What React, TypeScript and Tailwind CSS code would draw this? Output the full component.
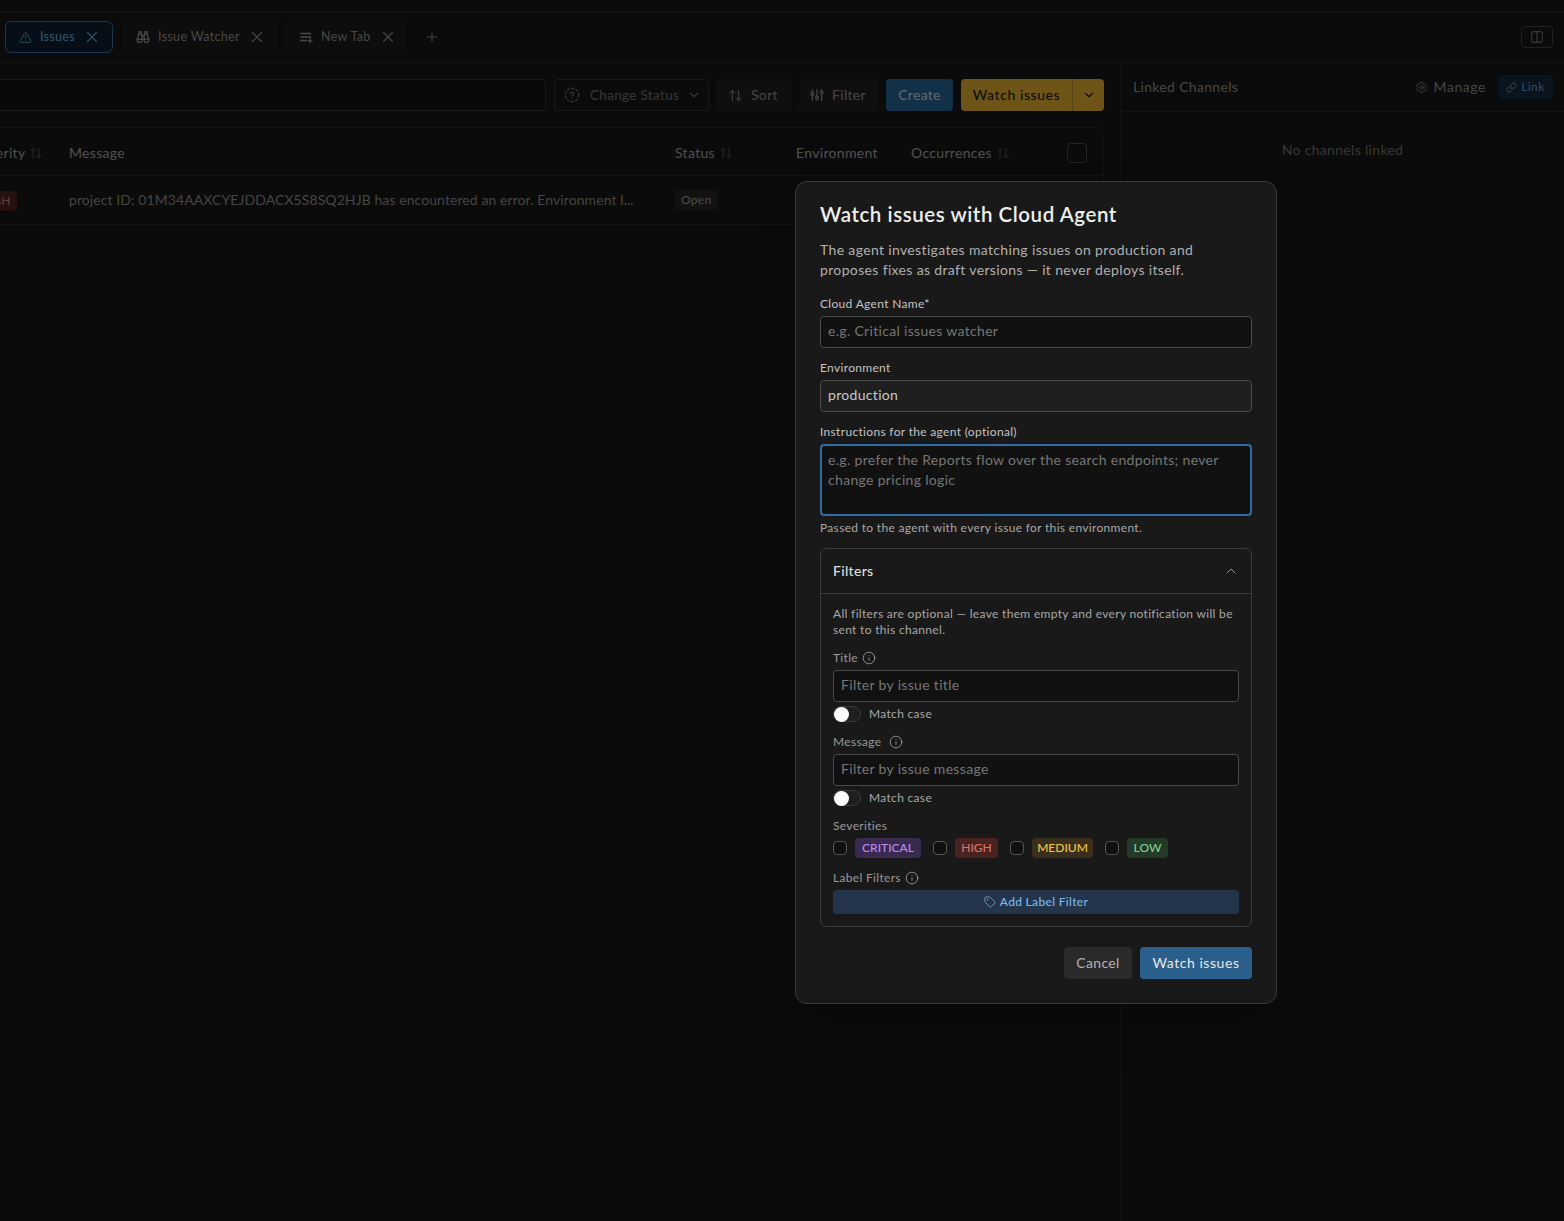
import type { ReactNode } from "react";
import {
  ArrowUpDown,
  Binoculars,
  ChevronDown,
  ChevronUp,
  Columns2,
  Info,
  Link,
  Plus,
  Settings,
  Tag,
  TriangleAlert,
  X,
} from "lucide-react";

const inputClass =
  "block h-8 w-full rounded border border-[#4a4a4a] bg-[#111111] px-[7px] pb-1 text-sm text-[#c8c8c8] outline-none placeholder:text-[#767676]";

function PageTab({ icon, label, active, width }: { icon: ReactNode; label: string; active?: boolean; width: string }) {
  return (
    <div
      className={`flex h-8 items-center gap-2 whitespace-nowrap rounded-md border pl-[13px] text-[12.5px] ${width} ${
        active
          ? "border-[#2f6a9c] bg-[#0c1f30] pr-[11px] text-[#69a8d8]"
          : "border-transparent bg-[#1b1b1b] pr-[10px] text-[#8e8e8e]"
      }`}
    >
      {icon}
      <span>{label}</span>
      <X size={18} strokeWidth={1.5} className="ml-auto shrink-0" />
    </div>
  );
}

function SortIcon() {
  return <ArrowUpDown size={14} strokeWidth={1.5} className="ml-1 text-[#5c5c5c]" />;
}

function HeaderCell({ label, sort, width }: { label: string; sort?: boolean; width: string }) {
  return (
    <div className={`flex shrink-0 items-center ${width}`}>
      {label}
      {sort && <SortIcon />}
    </div>
  );
}

function DashedHelp() {
  return (
    <svg width="16" height="16" viewBox="0 0 24 24" fill="none" stroke="currentColor" strokeWidth="1.8" strokeLinecap="round" className="shrink-0">
      <circle cx="12" cy="12" r="10" strokeDasharray="3.4 3.2" />
      <path d="M9.4 9.4a2.7 2.7 0 0 1 5.2.9c0 1.8-2.6 2.4-2.6 3.6" />
      <path d="M12 17.2h.01" />
    </svg>
  );
}

function ListAdd() {
  return (
    <svg width="14" height="14" viewBox="0 0 24 24" fill="none" stroke="currentColor" strokeWidth="2.2" strokeLinecap="round" className="shrink-0">
      <path d="M3 6h17" />
      <path d="M3 12h17" />
      <path d="M3 18h10" />
      <path d="M19 15v7" />
      <path d="M15.5 18.5h7" />
    </svg>
  );
}

function Sliders() {
  return (
    <svg width="14" height="14" viewBox="0 0 24 24" fill="none" stroke="currentColor" strokeWidth="2.2" strokeLinecap="round">
      <path d="M4 3v5M4 13v8" />
      <circle cx="4" cy="10.5" r="2.4" />
      <path d="M12 3v11M12 19v2" />
      <circle cx="12" cy="16.5" r="2.4" />
      <path d="M20 3v2M20 10v11" />
      <circle cx="20" cy="7.5" r="2.4" />
    </svg>
  );
}

function ToolButton({ icon, label, width }: { icon: ReactNode; label: string; width: string }) {
  return (
    <div className={`flex h-8 items-center gap-2 rounded bg-[#1f1f1f] pl-[11px] text-sm text-[#8c8c8c] ${width}`}>
      {icon}
      {label}
    </div>
  );
}

function FieldLabel({ children }: { children: ReactNode }) {
  return <div className="text-xs leading-4 text-[#c4c4c4]">{children}</div>;
}

function InfoLabel({ label, gap }: { label: string; gap: string }) {
  return (
    <div className={`flex items-center text-xs leading-4 text-[#9a9a9a] ${gap}`}>
      {label}
      <Info size={14} strokeWidth={1.5} />
    </div>
  );
}

function MatchCase() {
  return (
    <div className="mt-1 flex h-4 items-center gap-2 text-xs text-[#a8a8a8]">
      <div className="flex h-4 w-7 items-center rounded-full border border-[#3a3a3a] bg-[#1f1f1f]">
        <div className="h-[15px] w-[15px] rounded-full bg-white" />
      </div>
      Match case
    </div>
  );
}

function Severity({ label, className }: { label: string; className: string }) {
  return (
    <div className="flex items-center gap-2">
      <div className="h-3.5 w-3.5 rounded-sm border border-[#555555] bg-[#111111]" />
      <span className={`flex h-5 items-center justify-center rounded text-xs font-medium tracking-normal ${className}`}>{label}</span>
    </div>
  );
}

export default function App() {
  return (
    <div className="relative h-screen overflow-hidden bg-[#161616] font-['Lato',sans-serif] tracking-[0.02em]">
      <div className="h-3 border-b border-[#262626]" />

      <div className="flex h-[51px] items-center border-b border-[#262626] pl-[5px] pr-[11px]">
        <PageTab icon={<TriangleAlert size={15} strokeWidth={1.5} />} label="Issues" active width="w-[108px]" />
        <div className="ml-[9px]">
          <PageTab icon={<Binoculars size={14} strokeWidth={2.2} />} label="Issue Watcher" width="w-[155px]" />
        </div>
        <div className="ml-2">
          <PageTab icon={<ListAdd />} label="New Tab" width="w-[122px]" />
        </div>
        <Plus size={16} strokeWidth={1.5} className="ml-[17px] text-[#8e8e8e]" />
        <div className="ml-auto flex h-[22px] w-8 items-center justify-center rounded border border-[#404040] text-[#8e8e8e]">
          <Columns2 size={14} strokeWidth={1.5} />
        </div>
      </div>

      <div className="-ml-[59px] flex h-full">
        <div className="w-[1180px] shrink-0 border-r border-[#262626] px-4 pt-4">
          <div className="flex h-8 gap-2">
            <div className="w-[589px] rounded border border-[#333333] bg-[#111111]" />
            <div className="flex h-8 w-[155px] items-center gap-2.5 whitespace-nowrap rounded border border-[#333333] pl-[9px] pr-2 text-[13.5px] text-[#6e6e6e]">
              <DashedHelp />
              Change Status
              <ChevronDown size={14} className="-ml-0.5 shrink-0" />
            </div>
            <ToolButton icon={<ArrowUpDown size={15} strokeWidth={1.6} />} label="Sort" width="w-[74px]" />
            <ToolButton icon={<Sliders />} label="Filter" width="w-[79px]" />
            <div className="flex h-8 w-[67px] items-center justify-center rounded bg-[#276093] text-sm text-[#c0d0dc]">
              Create
            </div>
            <div className="flex h-8 w-[143px] rounded bg-[#dea931] text-sm font-medium tracking-[0.04em] text-[#1a1a1a]">
              <div className="flex w-[112px] items-center justify-center border-r border-[#b0862a]">Watch issues</div>
              <div className="flex flex-1 items-center justify-center">
                <ChevronDown size={14} />
              </div>
            </div>
          </div>

          <div className="mt-4 rounded-lg border border-[#262626]">
            <div className="flex h-12 items-center border-b border-[#262626] pl-[15px] pr-4 pt-0.5 text-sm text-[#a0a0a0]">
              <HeaderCell label="Severity" sort width="w-[96px]" />
              <HeaderCell label="Message" width="w-[606px]" />
              <HeaderCell label="Status" sort width="w-[121px]" />
              <HeaderCell label="Environment" width="w-[115px]" />
              <HeaderCell label="Occurrences" sort width="w-[120px]" />
              <div className="ml-auto h-5 w-5 rounded border border-[#4a4a4a]" />
            </div>
            <div className="flex h-12 items-center pl-[15px] text-sm text-[#8a8a8a]">
              <div className="w-[96px] shrink-0">
                <span className="inline-flex h-5 items-center rounded bg-[#4a2320] px-1.5 text-xs text-[#d9736a]">HIGH</span>
              </div>
              <div className="w-[606px] shrink-0 whitespace-nowrap tracking-[0.006em]">
                project ID: 01M34AAXCYEJDDACX5S8SQ2HJB has encountered an error. Environment l...
              </div>
              <span className="inline-flex h-5 items-center rounded bg-[#242424] px-1.5 text-xs text-[#9a9a9a]">Open</span>
            </div>
          </div>
        </div>

        <div className="flex-1">
          <div className="flex h-[49px] items-center border-b border-[#262626] pl-3 pr-[11px] text-sm text-[#8c8c8c]">
            Linked Channels
            <div className="ml-auto flex items-center gap-1.5 tracking-[0.04em]">
              <Settings size={13} strokeWidth={1.5} />
              Manage
            </div>
            <div className="ml-3 flex h-6 w-[55px] items-center justify-center gap-1 rounded bg-[#13283b] text-xs font-medium text-[#5f97c6]">
              <Link size={11} />
              Link
            </div>
          </div>
          <div className="mt-7 text-center text-sm text-[#6e6e6e]">No channels linked</div>
        </div>
      </div>

      <div className="absolute inset-0 bg-black/50" />

      <div className="absolute left-[795px] top-[181px] w-[482px] rounded-xl border border-[#3a3a3a] bg-[#191919] px-6 pb-6 pt-[18px] shadow-2xl">
        <h2 className="text-[20.5px] leading-7 font-semibold tracking-[0.027em] text-[#eeeeee]">Watch issues with Cloud Agent</h2>
        <p className="mt-3 text-sm leading-5 tracking-[0.025em] text-[#b0b0b0]">
          The agent investigates matching issues on production and proposes fixes as draft versions — it never deploys itself.
        </p>

        <div className="mt-4">
          <FieldLabel>Cloud Agent Name*</FieldLabel>
          <input className={`mt-1 ${inputClass}`} placeholder="e.g. Critical issues watcher" />
        </div>
        <div className="mt-3">
          <FieldLabel>Environment</FieldLabel>
          <input
            className="mt-1 block h-8 w-full rounded border border-[#4a4a4a] bg-[#1f1f1f] px-[7px] pb-1 text-sm text-[#c8c8c8] outline-none"
            defaultValue="production"
          />
        </div>
        <div className="mt-3">
          <FieldLabel>Instructions for the agent (optional)</FieldLabel>
          <textarea
            className="mt-1 block h-[72px] w-full resize-none rounded border-2 border-[#2e6ca3] bg-[#111111] px-1.5 py-1 text-sm leading-5 outline-none placeholder:text-[#767676]"
            placeholder="e.g. prefer the Reports flow over the search endpoints; never change pricing logic"
          />
          <div className="mt-1 text-xs leading-4 text-[#a8a8a8]">Passed to the agent with every issue for this environment.</div>
        </div>

        <div className="mt-3 rounded-md border border-[#3a3a3a]">
          <div className="flex h-[45px] items-center justify-between border-b border-[#3a3a3a] px-3 text-sm font-medium text-[#dedede]">
            Filters
            <ChevronUp size={16} strokeWidth={1.5} className="text-[#8e8e8e]" />
          </div>
          <div className="p-3">
            <p className="text-xs leading-4 text-[#a8a8a8]">
              All filters are optional — leave them empty and every notification will be sent to this channel.
            </p>
            <div className="mt-3">
              <InfoLabel label="Title" gap="gap-1" />
              <input className={`mt-1 ${inputClass}`} placeholder="Filter by issue title" />
              <MatchCase />
            </div>
            <div className="mt-3">
              <InfoLabel label="Message" gap="gap-2" />
              <input className={`mt-1 ${inputClass}`} placeholder="Filter by issue message" />
              <MatchCase />
            </div>
            <div className="mt-3 text-xs leading-4 text-[#9a9a9a]">Severities</div>
            <div className="mt-1 flex gap-3">
              <Severity label="CRITICAL" className="w-[66px] bg-[#3a2a4f] text-[#b98cf0]" />
              <Severity label="HIGH" className="w-[43px] bg-[#4a2320] text-[#d9736a]" />
              <Severity label="MEDIUM" className="w-[61px] bg-[#3a2f1c] text-[#f0c24a]" />
              <Severity label="LOW" className="w-[41px] bg-[#223a26] text-[#7fd08a]" />
            </div>
            <div className="mt-3">
              <InfoLabel label="Label Filters" gap="gap-1" />
              <div className="mt-1 flex h-6 items-center justify-center gap-1 rounded bg-[#24344a] text-xs font-medium text-[#7db8ea]">
                <Tag size={12} strokeWidth={1.5} />
                Add Label Filter
              </div>
            </div>
          </div>
        </div>

        <div className="mt-5 flex justify-end gap-2 text-sm">
          <div className="flex h-8 w-[68px] items-center justify-center rounded bg-[#2a2a2a] text-[#b3b3b3]">Cancel</div>
          <div className="flex h-8 w-[112px] items-center justify-center rounded bg-[#2a5f8c] tracking-[0.04em] text-[#e8e8e8]">
            Watch issues
          </div>
        </div>
      </div>
    </div>
  );
}
